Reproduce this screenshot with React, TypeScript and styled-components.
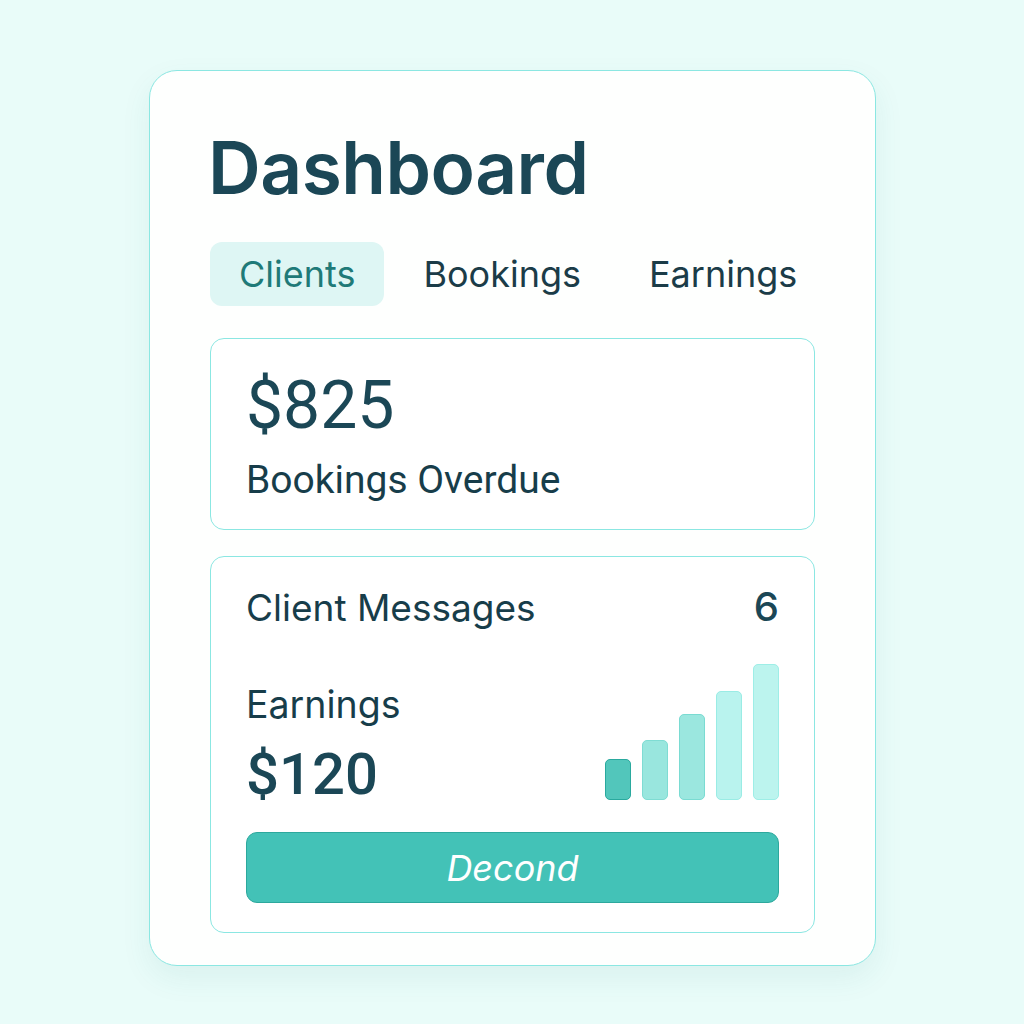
import React from "react";
import styled, { createGlobalStyle } from "styled-components";

const Global = createGlobalStyle`
  html, body { margin: 0; padding: 0; background: #e9fcf9; }
  body { font-family: Inter, "Noto Sans", sans-serif; color: #1b4756; }
`;

const Page = styled.div`
  width: 1024px;
  height: 1024px;
  box-sizing: border-box;
  padding: 70px 0 0 149px;
`;

const Card = styled.div`
  width: 727px;
  height: 896px;
  box-sizing: border-box;
  background: #fefffe;
  border: 1.5px solid #8be7e2;
  border-radius: 28px;
  box-shadow: 0 12px 30px rgba(40, 120, 110, 0.08);
  padding: 60px 60px 0 60px;
  display: flex;
  flex-direction: column;
`;

const Title = styled.h1`
  margin: 0 0 0 -2px;
  font-size: 73px;
  line-height: 1;
  font-weight: 600;
  letter-spacing: -0.5px;
  color: #1b4756;
`;

const Tabs = styled.div`
  display: flex;
  gap: 10px;
  margin-top: 38px;
`;

const Tab = styled.div<{ $active?: boolean }>`
  height: 64px;
  display: flex;
  align-items: center;
  padding: 0 29px;
  border-radius: 12px;
  font-size: 36px;
  font-weight: 400;
  color: ${(p) => (p.$active ? "#1f7a78" : "#1b3c48")};
  background: ${(p) => (p.$active ? "#def6f4" : "transparent")};
`;

const Panel = styled.div`
  width: 605px;
  box-sizing: border-box;
  border: 1.5px solid #8be7e2;
  border-radius: 14px;
  background: #fff;
  padding: 0 35px;
`;

const SummaryPanel = styled(Panel)`
  margin-top: 32px;
  height: 192px;
  padding-top: 34px;
`;

const BigAmount = styled.div`
  font-family: Roboto, "Liberation Sans", sans-serif;
  font-size: 66px;
  line-height: 1;
  font-weight: 400;
  color: #1b4756;
`;

const Label = styled.div`
  font-family: Roboto, "Liberation Sans", sans-serif;
  font-size: 39px;
  line-height: 1;
  margin-top: 22px;
  color: #173d4a;
`;

const DetailPanel = styled(Panel)`
  margin-top: 26px;
  height: 377px;
  padding-top: 30px;
  display: flex;
  flex-direction: column;
`;

const Row = styled.div`
  display: flex;
  justify-content: space-between;
  align-items: baseline;
  height: 40px;
  font-size: 37px;
  line-height: 40px;
  color: #173d4a;
`;

const Count = styled.span`
  font-size: 40px;
  font-weight: 500;
  color: #1b4756;
`;

const EarningsRow = styled.div`
  display: flex;
  justify-content: space-between;
  align-items: flex-end;
  margin-top: 37px;
`;

const EarningsText = styled.div`
  display: flex;
  flex-direction: column;
  margin-bottom: 3px;
`;

const EarningsLabel = styled.div`
  font-size: 37.5px;
  line-height: 1;
  color: #173d4a;
`;

const EarningsAmount = styled.div`
  font-family: Roboto, "Liberation Sans", sans-serif;
  font-size: 58px;
  line-height: 1;
  font-weight: 500;
  margin-top: 22px;
  color: #1b4756;
`;

const Chart = styled.div`
  display: flex;
  align-items: flex-end;
  gap: 11px;
  height: 136px;
  margin-bottom: 6px;
`;

const Bar = styled.div<{ $bg: string; $border: string }>`
  width: 26px;
  box-sizing: border-box;
  border-radius: 5px;
  background: ${(p) => p.$bg};
  border: 1.5px solid ${(p) => p.$border};
`;

const Button = styled.button`
  margin-top: 26px;
  height: 71px;
  width: 100%;
  border-radius: 11px;
  background: #43c2b7;
  border: 1.5px solid #2da89d;
  color: #ffffff;
  font-family: Inter, "Noto Sans", sans-serif;
  font-style: italic;
  font-size: 36px;
  font-weight: 400;
  cursor: pointer;
`;

const bars = [
  { h: 41, bg: "#52c6bb", border: "#2aa99e" },
  { h: 60, bg: "#99e6de", border: "#7fdcd3" },
  { h: 86, bg: "#9be7df", border: "#7adbd2" },
  { h: 109, bg: "#b9f3ee", border: "#9aece5" },
  { h: 136, bg: "#bcf4ee", border: "#9eeee7" },
];

export default function App() {
  return (
    <>
      <Global />
      <Page>
        <Card>
          <Title>Dashboard</Title>
          <Tabs>
            <Tab $active>Clients</Tab>
            <Tab>Bookings</Tab>
            <Tab>Earnings</Tab>
          </Tabs>
          <SummaryPanel>
            <BigAmount>$825</BigAmount>
            <Label>Bookings Overdue</Label>
          </SummaryPanel>
          <DetailPanel>
            <Row>
              <span>Client Messages</span>
              <Count>6</Count>
            </Row>
            <EarningsRow>
              <EarningsText>
                <EarningsLabel>Earnings</EarningsLabel>
                <EarningsAmount>$120</EarningsAmount>
              </EarningsText>
              <Chart>
                {bars.map((b, i) => (
                  <Bar key={i} $bg={b.bg} $border={b.border} style={{ height: b.h }} />
                ))}
              </Chart>
            </EarningsRow>
            <Button>Decond</Button>
          </DetailPanel>
        </Card>
      </Page>
    </>
  );
}
